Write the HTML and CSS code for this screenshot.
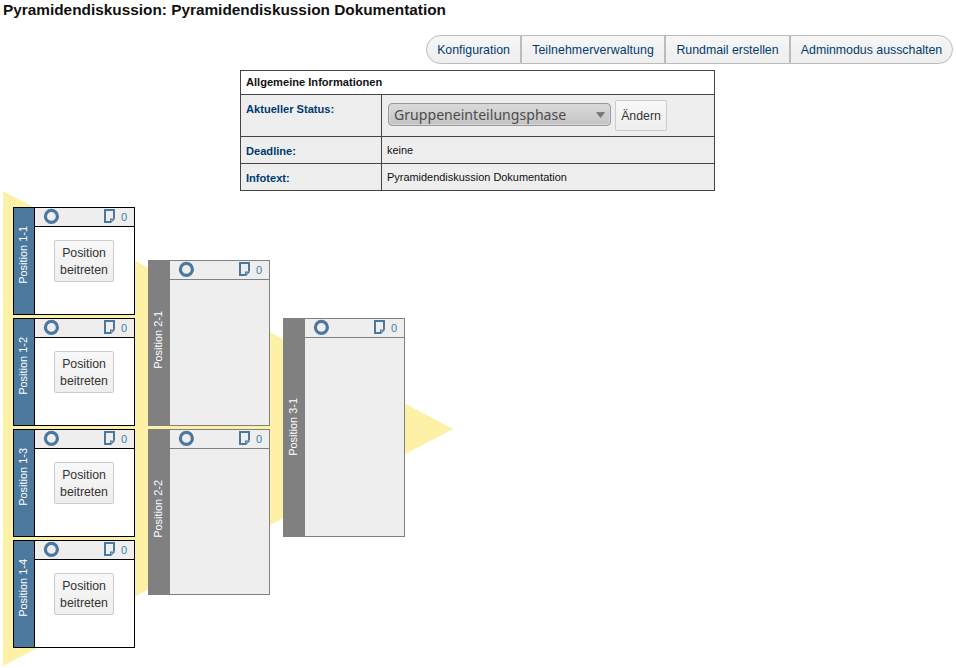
FILE: index.html
```html
<!DOCTYPE html>
<html lang="de">
<head>
<meta charset="utf-8">
<title>Pyramidendiskussion</title>
<link rel="stylesheet" href="styles.css">
</head>
<body>
<svg class="defs" width="0" height="0" aria-hidden="true">
  <symbol id="ring" viewBox="0 0 16 16"><circle cx="8.400" cy="8.400" r="6" fill="none" stroke="#4c789e" stroke-width="3.200"/></symbol>
  <symbol id="note" viewBox="0 0 12 14"><path d="M6.500 13H1V1h9v8.500" fill="none" stroke="#4c789e" stroke-width="2"/><path d="M6 14v-4.500h5V10l-4 4z" fill="#4c789e"/><path d="M7.300 12.300v-1.600h1.600z" fill="#eee"/></symbol>
</svg>
<h1>Pyramidendiskussion: Pyramidendiskussion Dokumentation</h1>
<nav class="actions">
  <a class="action config">Konfiguration</a><a class="action members">Teilnehmerverwaltung</a><a class="action mail">Rundmail erstellen</a><a class="action admin">Adminmodus ausschalten</a>
</nav>
<table class="info">
  <colgroup><col class="label-col"><col></colgroup>
  <tr class="head"><th colspan="2">Allgemeine Informationen</th></tr>
  <tr class="status"><th>Aktueller Status:</th><td><div class="status-form"><span class="select"><span class="select-label">Gruppeneinteilungsphase</span><svg class="arrow" width="9" height="6" viewBox="0 0 9 6"><path d="M.5.500h8l-4 5z" fill="#777" stroke="#666" stroke-width=".6"/></svg></span><button class="change">Ändern</button></div></td></tr>
  <tr class="plain"><th>Deadline:</th><td>keine</td></tr>
  <tr class="plain"><th>Infotext:</th><td>Pyramidendiskussion Dokumentation</td></tr>
</table>
<main class="pyramid">
  <div class="level first">
    <section class="position open"><div class="side"><span>Position 1-1</span></div><div class="body"><div class="bar"><svg class="ring"><use href="#ring"/></svg><svg class="note"><use href="#note"/></svg><span class="count">0</span></div><button class="join">Position beitreten</button></div></section>
    <section class="position open"><div class="side"><span>Position 1-2</span></div><div class="body"><div class="bar"><svg class="ring"><use href="#ring"/></svg><svg class="note"><use href="#note"/></svg><span class="count">0</span></div><button class="join">Position beitreten</button></div></section>
    <section class="position open"><div class="side"><span>Position 1-3</span></div><div class="body"><div class="bar"><svg class="ring"><use href="#ring"/></svg><svg class="note"><use href="#note"/></svg><span class="count">0</span></div><button class="join">Position beitreten</button></div></section>
    <section class="position open"><div class="side"><span>Position 1-4</span></div><div class="body"><div class="bar"><svg class="ring"><use href="#ring"/></svg><svg class="note"><use href="#note"/></svg><span class="count">0</span></div><button class="join">Position beitreten</button></div></section>
  </div>
  <div class="level second">
    <section class="position"><div class="side"><span>Position 2-1</span></div><div class="body"><div class="bar"><svg class="ring"><use href="#ring"/></svg><svg class="note"><use href="#note"/></svg><span class="count">0</span></div></div></section>
    <section class="position"><div class="side"><span>Position 2-2</span></div><div class="body"><div class="bar"><svg class="ring"><use href="#ring"/></svg><svg class="note"><use href="#note"/></svg><span class="count">0</span></div></div></section>
  </div>
  <div class="level third">
    <section class="position"><div class="side"><span>Position 3-1</span></div><div class="body"><div class="bar"><svg class="ring"><use href="#ring"/></svg><svg class="note"><use href="#note"/></svg><span class="count">0</span></div></div></section>
  </div>
  <svg class="triangle" width="450" height="475" viewBox="0 0 450 475"><path d="M0 0L450 238L0 475z" fill="#fdf1a7"/></svg>
</main>
</body>
</html>
```
FILE: styles.css
```css
* { box-sizing: border-box; }
body {
  margin: 0;
  padding: 0 3px;
  height: 668px;
  overflow: hidden;
  background: #fff;
  color: #111;
  font: 11px/16px "Liberation Sans", Arial, sans-serif;
}
.defs { position: absolute; }
h1 { margin: 0; height: 35px; font-size: 15.36px; line-height: 19px; }
.actions { display: flex; justify-content: flex-end; height: 29px; }
.action {
  border: 1px solid #bbb;
  background: linear-gradient(#f6f6f6, #eee);
  color: #003b70;
  font-size: 12.35px;
  line-height: 28px;
  text-align: center;
  white-space: nowrap;
}
.config { width: 95px; border-radius: 15px 0 0 15px; }
.members { width: 144px; letter-spacing: 0.08px; }
.mail { width: 125px; }
.admin { width: 163px; border-radius: 0 15px 15px 0; }
.info {
  width: 475px;
  margin: 6px 0 0 237px;
  border-collapse: collapse;
  table-layout: fixed;
  background: #eee;
  color: #111;
}
.label-col { width: 141px; }
.info th, .info td {
  border: 1px solid #444;
  padding: 0 5px;
  text-align: left;
  vertical-align: top;
}
.info th { color: #003b70; padding-top: 6px; font-size: 11.1px; }
.info td { padding-top: 5px; font-size: 10.95px; }
.head { height: 24px; background: #fff; }
.info .head th { color: #111; padding-top: 3px; }
.status { height: 42px; }
.plain { height: 27px; }
.status-form { display: flex; align-items: center; gap: 4px; height: 31px; padding-left: 1px; }
.select {
  display: flex;
  align-items: center;
  justify-content: space-between;
  width: 223px;
  height: 23px;
  margin-top: -2px;
  padding: 0 5px;
  border: 1px solid #999;
  border-radius: 4px;
  background: linear-gradient(#dadada, #c3c3c3);
  box-shadow: inset 0 0 0 1px #d7d7d7;
  color: #4c4c4c;
}
.select-label { font: 14.1px/20px "Noto Sans", sans-serif; white-space: nowrap; }
.arrow { margin-top: 1px; }
button {
  padding: 1px 0 0;
  border: 1px solid #ccc;
  border-radius: 2px;
  background: linear-gradient(#f8f8f8, #eee);
  color: #333;
  font: 12.3px/17px "Liberation Sans", Arial, sans-serif;
}
.change { width: 52px; height: 31px; }
.pyramid { position: relative; display: flex; gap: 13px; padding: 16px 0 0 10px; }
.triangle { position: absolute; left: 0; top: 0; z-index: -1; }
.level { display: flex; flex-direction: column; gap: 3px; width: 122px; }
.second { padding-top: 53px; }
.third { padding-top: 111px; }
.position { display: flex; height: 108px; border: 1px solid #808080; background: #eee; }
.second .position { height: 166px; }
.third .position { height: 219px; }
.position.open { border-color: #000; background: #fff; }
.side {
  display: flex;
  align-items: center;
  justify-content: center;
  width: 21px;
  padding: 0 2px 7px 0;
  background: #808080;
  color: #fff;
  font-size: 10.95px;
  line-height: 13px;
}
.open .side { background: #4c789e; border-right: 1px solid #000; padding-bottom: 13px; }
.third .side { padding-bottom: 2px; }
.side span { writing-mode: vertical-rl; transform: rotate(180deg); white-space: nowrap; }
.body { flex: 1; }
.bar {
  display: flex;
  align-items: center;
  height: 19px;
  padding: 0 7px 2px 8px;
  border-bottom: 1px solid #808080;
  background: #eee;
}
.open .bar { border-color: #000; }
.ring { width: 16px; height: 16px; }
.note { width: 12px; height: 14px; margin-left: auto; }
.count { margin-left: 5px; color: #3b80ad; line-height: 16px; padding-top: 1px; }
.join { display: block; width: 60px; height: 42px; margin: 13px 0 0 19px; }
```
